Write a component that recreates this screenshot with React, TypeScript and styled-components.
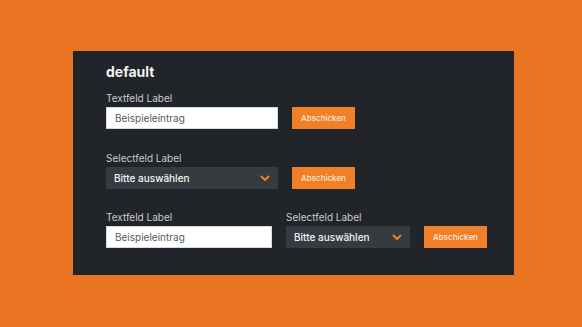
import React from 'react';
import styled, { createGlobalStyle } from 'styled-components';

const Global = createGlobalStyle`
  html, body {
    margin: 0;
    padding: 0;
    background: #e97522;
  }
  body {
    font-family: Inter, "Noto Sans", sans-serif;
  }
`;

const Page = styled.div`
  width: 582px;
  height: 327px;
  box-sizing: border-box;
  padding: 51px 0 0 73px;
`;

const Panel = styled.div`
  width: 441px;
  height: 224px;
  box-sizing: border-box;
  background: #212428;
  padding: 12px 0 0 33px;
  display: flex;
  flex-direction: column;
`;

const Title = styled.h2`
  margin: 0;
  font-size: 14px;
  line-height: 18px;
  font-weight: 700;
  color: #f2f2f2;
`;

const Row = styled.div<{ $top: number }>`
  display: flex;
  align-items: flex-end;
  gap: 14px;
  margin-top: ${(p) => p.$top}px;
`;

const Field = styled.div`
  display: flex;
  flex-direction: column;
  gap: 2px;
`;

const Label = styled.label`
  font-size: 10px;
  line-height: 14px;
  color: #c9cbce;
`;

const Input = styled.div<{ $w: number }>`
  width: ${(p) => p.$w}px;
  height: 22px;
  box-sizing: border-box;
  background: #ffffff;
  border: 1px solid #d7d9dc;
  padding: 0 8px;
  display: flex;
  align-items: center;
  font-size: 10px;
  color: #555a60;
`;

const Select = styled.div<{ $w: number }>`
  width: ${(p) => p.$w}px;
  height: 22px;
  box-sizing: border-box;
  background: #363a41;
  padding: 0 8px 0 8px;
  display: flex;
  align-items: center;
  justify-content: space-between;
  font-size: 10px;
  font-weight: 500;
  color: #f4f4f4;
`;

const Button = styled.button`
  width: 63px;
  height: 22px;
  border: none;
  padding: 0;
  background: #f07f27;
  color: #fde9d6;
  font-family: inherit;
  font-size: 8px;
  font-weight: 500;
`;

const Chevron = () => (
  <svg width="10" height="7" viewBox="0 0 10 7">
    <path d="M1.5 1.5 L5 5 L8.5 1.5" fill="none" stroke="#f07f27" strokeWidth="2" strokeLinecap="round" strokeLinejoin="round" />
  </svg>
);

export default function App() {
  return (
    <Page>
      <Global />
      <Panel>
        <Title>default</Title>
        <Row $top={10}>
          <Field>
            <Label>Textfeld Label</Label>
            <Input $w={172}>Beispieleintrag</Input>
          </Field>
          <Button>Abschicken</Button>
        </Row>
        <Row $top={22}>
          <Field>
            <Label>Selectfeld Label</Label>
            <Select $w={172}>
              Bitte auswählen
              <Chevron />
            </Select>
          </Field>
          <Button>Abschicken</Button>
        </Row>
        <Row $top={21}>
          <Field>
            <Label>Textfeld Label</Label>
            <Input $w={166}>Beispieleintrag</Input>
          </Field>
          <Field>
            <Label>Selectfeld Label</Label>
            <Select $w={124}>
              Bitte auswählen
              <Chevron />
            </Select>
          </Field>
          <Button>Abschicken</Button>
        </Row>
      </Panel>
    </Page>
  );
}
